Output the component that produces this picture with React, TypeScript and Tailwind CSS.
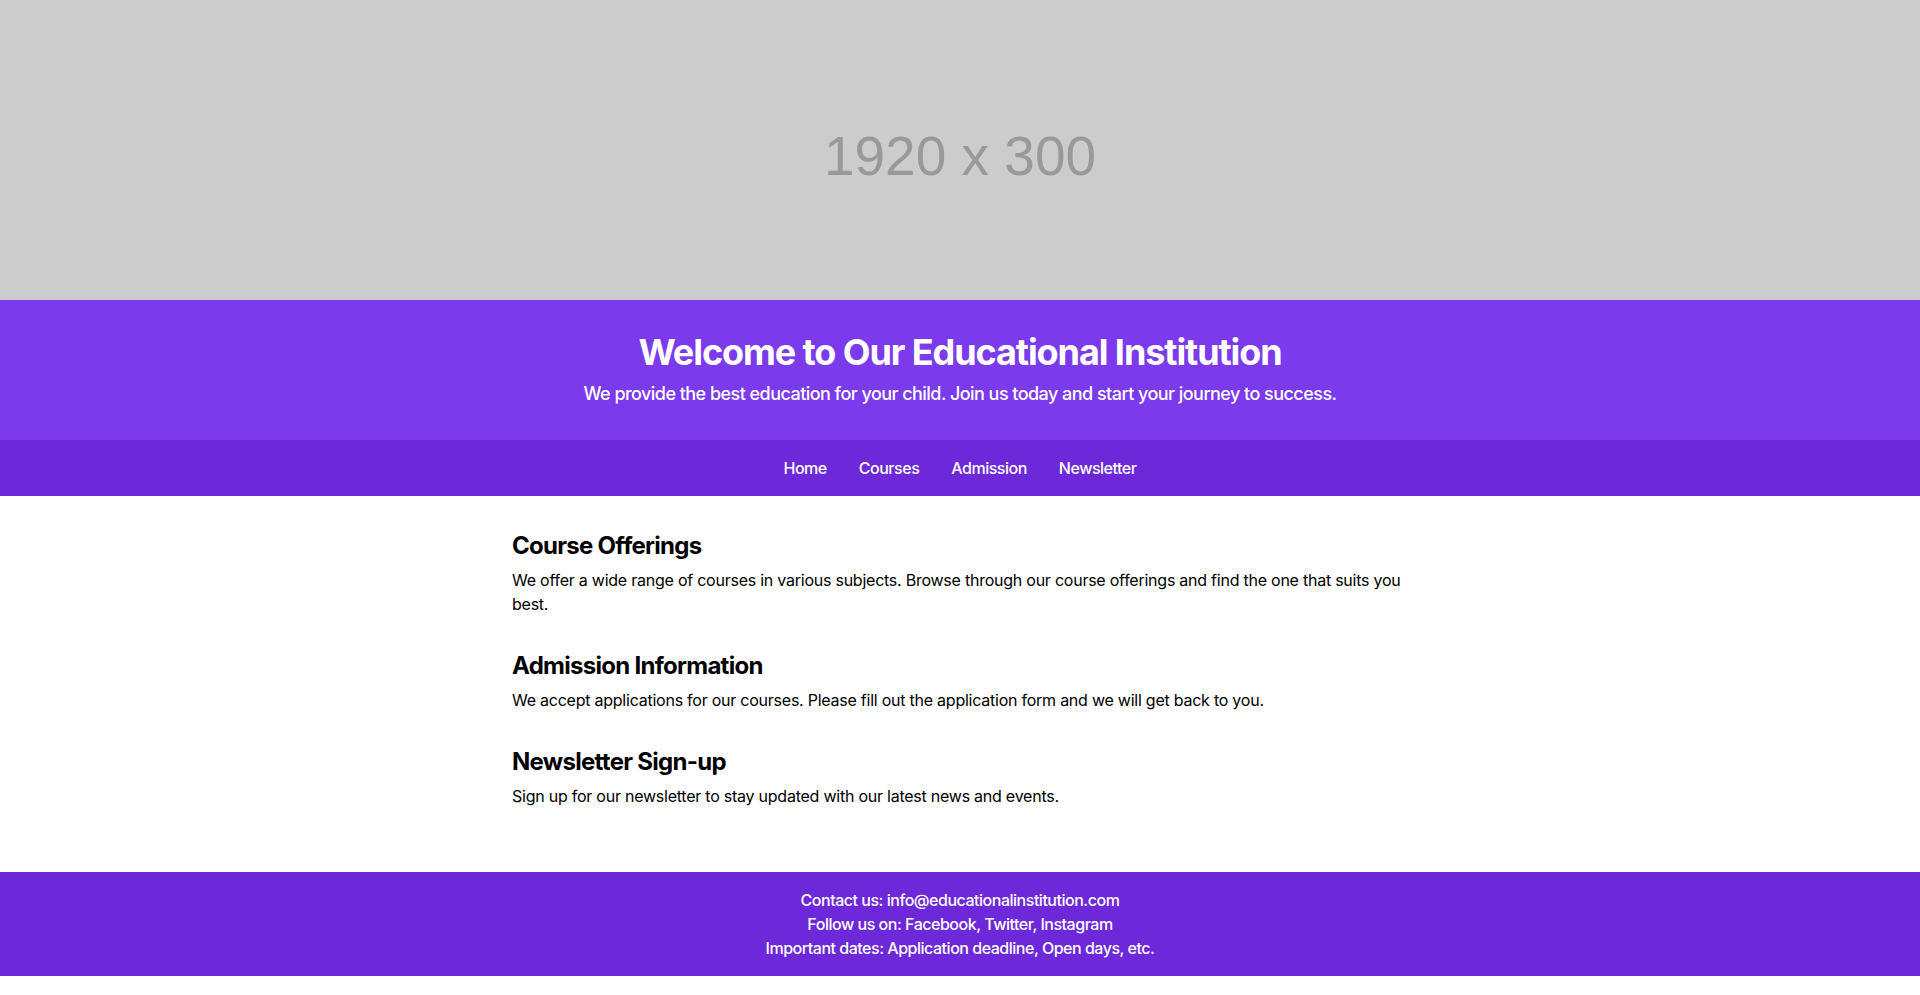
import React from 'react';

const sections = [
    {
        title: 'Course Offerings',
        body: 'We offer a wide range of courses in various subjects. Browse through our course offerings and find the one that suits you best.',
    },
    {
        title: 'Admission Information',
        body: 'We accept applications for our courses. Please fill out the application form and we will get back to you.',
    },
    {
        title: 'Newsletter Sign-up',
        body: 'Sign up for our newsletter to stay updated with our latest news and events.',
    },
];

const navLinks = ['Home', 'Courses', 'Admission', 'Newsletter'];

export default function App() {
    return (
        <div className="font-['Inter',sans-serif] text-black bg-white">
            {/* banner placeholder */}
            <div className="h-[300px] bg-[#cccccc] flex items-center justify-center">
                <span className="font-['Liberation_Sans',Arial,sans-serif] text-[55px] text-[#999999] leading-none pt-[12px]">
                    1920 x 300
                </span>
            </div>

            <header className="bg-[#7c3aed] text-white text-center py-8">
                <h1 className="text-4xl font-bold mb-2 tracking-[-0.03em]">
                    Welcome to Our Educational Institution
                </h1>
                <p className="text-lg font-medium tracking-[-0.03em]">
                    We provide the best education for your child. Join us today and start your journey to success.
                </p>
            </header>

            <nav className="bg-[#6d28d9] h-14 flex items-center justify-center gap-8">
                {navLinks.map((link) => (
                    <a key={link} href="#" className="text-white font-medium text-base tracking-[-0.03em]">
                        {link}
                    </a>
                ))}
            </nav>

            <main className="max-w-4xl mx-auto py-8">
                {sections.map((s) => (
                    <section key={s.title} className="mb-8">
                        <h2 className="text-2xl font-bold pt-[2px] mb-[6px] tracking-[-0.03em]">{s.title}</h2>
                        <p className="text-base leading-6 tracking-[-0.015em]">{s.body}</p>
                    </section>
                ))}
            </main>

            <footer className="bg-[#6d28d9] text-white text-center py-4 font-medium tracking-[-0.03em]">
                <p>Contact us: info@educationalinstitution.com</p>
                <p>Follow us on: Facebook, Twitter, Instagram</p>
                <p>Important dates: Application deadline, Open days, etc.</p>
            </footer>
        </div>
    );
}
